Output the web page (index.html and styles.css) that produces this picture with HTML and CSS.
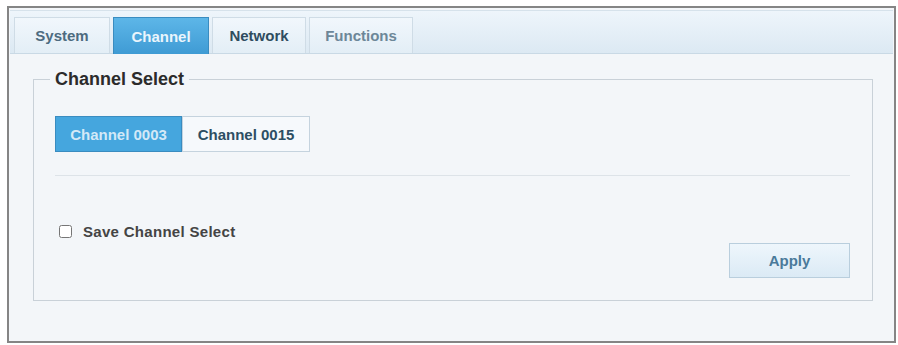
FILE: index.html
```html
<!doctype html>
<html lang="en">
<head>
  <meta charset="UTF-8" />
  <title>Channel Settings</title>
  <link rel="stylesheet" href="styles.css">
</head>
<body>
  <div class="panel">
    <div class="tab-bar">
      <a href="#" class="tab tab-system">System</a>
      <a href="#" class="tab tab-channel active">Channel</a>
      <a href="#" class="tab tab-network">Network</a>
      <a href="#" class="tab tab-functions">Functions</a>
    </div>

    <fieldset class="channel-box">
      <legend>Channel Select</legend>

      <div class="channel-group">
        <button class="channel-btn active">Channel 0003</button>
        <button class="channel-btn">Channel 0015</button>
      </div>

      <div class="divider"></div>

      <label class="save-row">
        <input type="checkbox" class="save-check">
        <span>Save Channel Select</span>
      </label>

      <div class="actions">
        <button class="apply-btn">Apply</button>
      </div>
    </fieldset>
  </div>
</body>
</html>
```

FILE: styles.css
```css
:root {
  --panel-bg: #f3f6f9;
  --tab-text: #4d6b80;
  --blue: #45a6de;
  --blue-dark: #3a8cc0;
  --line: #c9d1d8;
}

body {
  margin: 0;
  padding: 0;
  background-color: #fff;
  font-family: "Liberation Sans", Arial, sans-serif;
}

.panel {
  margin: 6px 0 0 7px;
  width: 885px;
  border: 2px solid #858585;
  background-color: var(--panel-bg);
  padding-bottom: 40px;
}

/* tabs */
.tab-bar {
  margin: 2px 1px 0 1px;
  height: 37px;
  padding: 5px 0 0 4px;
  display: flex;
  gap: 3px;
  align-items: flex-end;
  background: linear-gradient(#eef5fb, #dce9f3);
  border-top: 1px solid #d6e2eb;
  border-bottom: 1px solid #c9d9e5;
}

.tab {
  height: 36px;
  box-sizing: border-box;
  display: flex;
  align-items: center;
  justify-content: center;
  font-size: 15px;
  font-weight: bold;
  color: var(--tab-text);
  text-decoration: none;
  background: linear-gradient(#f1f7fc, #e3eef6);
  border: 1px solid #cfdce6;
  border-bottom: none;
}

.tab-system { width: 96px; }
.tab-channel { width: 96px; }
.tab-network { width: 94px; color: #2f4c60; }
.tab-functions { width: 104px; color: #6d8798; }

.tab.active {
  height: 37px;
  margin-bottom: -1px;
  color: #eaf5fc;
  background: linear-gradient(#5db6e8, #3f9bd4);
  border-color: var(--blue-dark);
}

/* channel select */
.channel-box {
  margin: 15px 21px 0 24px;
  padding: 0 22px 22px 21px;
  border: 1px solid var(--line);
  min-width: 0;
}

.channel-box legend {
  margin-left: -5px;
  padding: 0 5px;
  font-size: 18px;
  font-weight: bold;
  line-height: 21px;
  color: #2b2b2b;
}

.channel-group {
  margin-top: 26px;
  display: flex;
}

.channel-btn {
  width: 128px;
  height: 36px;
  font-family: inherit;
  font-size: 15px;
  font-weight: bold;
  color: #2d4e63;
  background-color: #f6f9fc;
  border: 1px solid #c5d3de;
  cursor: pointer;
}

.channel-btn.active {
  width: 127px;
  color: #d3e9f7;
  background-color: var(--blue);
  border-color: var(--blue-dark);
}

.divider {
  margin-top: 23px;
  border-top: 1px solid #dde3e8;
}

.save-row {
  margin-top: 45px;
  display: flex;
  align-items: center;
  height: 20px;
  font-size: 15px;
  font-weight: bold;
  letter-spacing: 0.3px;
  color: #444;
}

.save-check {
  margin: 0 11px 0 4px;
  width: 13px;
  height: 13px;
}

.actions {
  margin-top: 2px;
  display: flex;
  justify-content: flex-end;
}

.apply-btn {
  width: 121px;
  height: 35px;
  font-family: inherit;
  font-size: 15px;
  font-weight: bold;
  color: #4a7a9a;
  background: linear-gradient(#eef6fc, #dbeaf5);
  border: 1px solid #b9cedd;
  cursor: pointer;
}
```
